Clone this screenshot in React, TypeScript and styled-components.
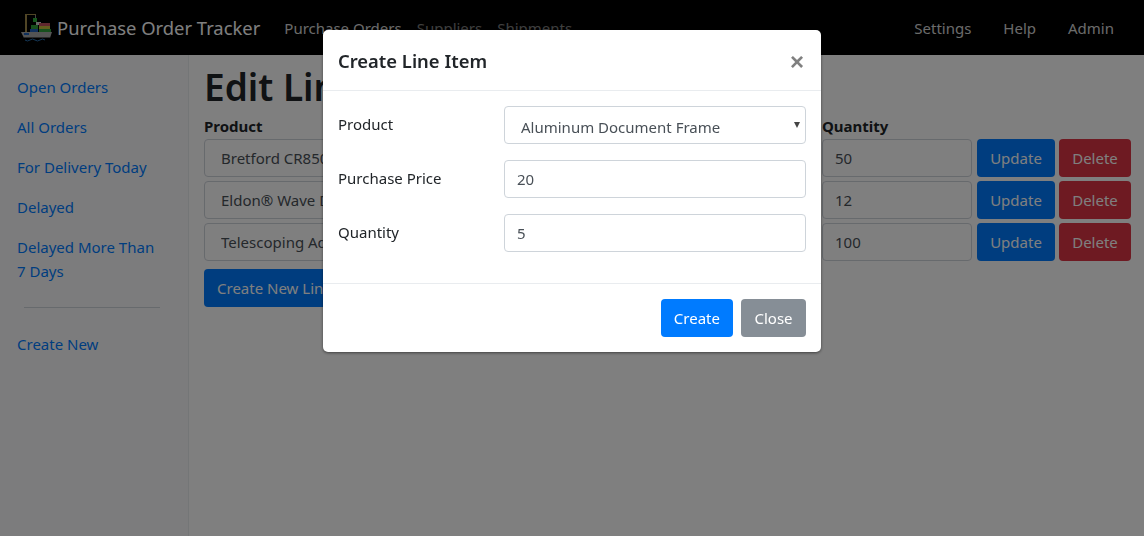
import React from 'react';
import styled, { createGlobalStyle } from 'styled-components';

const GlobalStyle = createGlobalStyle`
  html, body {
    margin: 0;
    height: 100%;
    overflow: hidden;
    background: #fff;
  }
  body {
    font-family: "Noto Sans", "Open Sans", "Liberation Sans", sans-serif;
    font-size: 15px;
    color: #212529;
  }
  * {
    box-sizing: border-box;
  }
`;

const Page = styled.div`
  height: 536px;
  display: flex;
  flex-direction: column;
`;

const Navbar = styled.nav`
  height: 55px;
  background: #000;
  display: flex;
  align-items: center;
  padding: 0 30px 0 21px;
  flex: none;
`;

const Brand = styled.a`
  display: flex;
  align-items: center;
  color: #fff;
  font-size: 18.4px;
  margin-right: 24px;
  white-space: nowrap;
  svg {
    margin-right: 4px;
  }
`;

const NavGroup = styled.div<{ $right?: boolean }>`
  display: flex;
  gap: ${(p) => (p.$right ? '32px' : '15px')};
  margin-left: ${(p) => (p.$right ? 'auto' : '0')};
`;

const NavLink = styled.a<{ $dim?: boolean }>`
  font-size: 15px;
  color: ${(p) => (p.$dim ? 'rgba(255,255,255,.5)' : 'rgba(255,255,255,.85)')};
  white-space: nowrap;
`;

const Body = styled.div`
  flex: 1;
  display: flex;
  min-height: 0;
`;

const Sidebar = styled.aside`
  width: 189px;
  flex: none;
  background: #f8f9fa;
  border-right: 1px solid #e9ecef;
  padding: 20px 28px 0 17px;
`;

const SideLink = styled.a`
  display: block;
  color: #007bff;
  line-height: 24px;
  margin-bottom: 16px;
`;

const SideRule = styled.hr`
  border: 0;
  border-top: 1px solid #ced4da;
  margin: 24px 0 24px 7px;
`;

const Main = styled.main`
  flex: 1;
  padding: 5px 13px 0 15px;
`;

const Title = styled.h1`
  margin: 0;
  font-size: 37px;
  font-weight: 600;
  line-height: 54px;
`;

const Grid = styled.div`
  display: grid;
  grid-template-columns: 308px 302px 151px 78px 72px;
  gap: 4px;
  align-items: center;
`;

const ColHead = styled.div<{ $col: string }>`
  font-weight: 700;
  line-height: 24px;
  margin-bottom: -3px;
  grid-column: ${(p) => p.$col};
`;

const Field = styled.input<{ $wide?: boolean }>`
  display: block;
  width: 100%;
  height: 38px;
  padding: 0 ${(p) => (p.$wide ? '16px' : '12px')};
  background: #fff;
  border: 1px solid #ced4da;
  border-radius: 4px;
  color: #495057;
  font: inherit;
  outline: none;
`;

const QtyField = styled(Field)`
  width: 150px;
`;

const Button = styled.button<{ $kind: 'primary' | 'danger' | 'secondary' }>`
  height: 38px;
  min-width: 65px;
  padding: 0 12px;
  border: 1px solid transparent;
  border-radius: 4px;
  color: #fff;
  font: inherit;
  white-space: nowrap;
  background: ${(p) =>
    p.$kind === 'primary' ? '#007bff' : p.$kind === 'danger' ? '#dc3545' : '#868e96'};
`;

const GridButton = styled(Button)`
  width: 100%;
  padding: 0;
`;

const CreateRow = styled.div`
  margin-top: 8px;
`;

const Backdrop = styled.div`
  position: fixed;
  inset: 0;
  background: rgba(0, 0, 0, 0.5);
`;

const Modal = styled.div`
  position: fixed;
  top: 30px;
  left: 323px;
  width: 498px;
  background: #fff;
  border-radius: 5px;
  box-shadow: 0 1px 3px rgba(0, 0, 0, 0.5);
`;

const ModalHeader = styled.div`
  height: 61px;
  border-bottom: 1px solid #e9ecef;
  padding: 0 15px;
  display: flex;
  align-items: center;
  justify-content: space-between;
`;

const ModalTitle = styled.h5`
  margin: 2px 0 0;
  font-size: 18.4px;
  font-weight: 600;
  line-height: 58px;
`;

const CloseX = styled.span`
  color: #808080;
  font-family: "Liberation Sans", sans-serif;
  font-weight: 700;
  font-size: 24px;
  line-height: 1;
  margin: 4px 2px 0 0;
`;

const ModalBody = styled.div`
  padding: 15px 15px 31px;
  display: flex;
  flex-direction: column;
  gap: 16px;
`;

const FormRow = styled.div`
  display: grid;
  grid-template-columns: 166px 302px;
  align-items: center;
`;

const FormLabel = styled.label`
  line-height: 24px;
  margin-top: -2px;
`;

const SelectWrap = styled.div`
  position: relative;
  &::after {
    content: '';
    position: absolute;
    right: 6px;
    top: 16px;
    border: 3.5px solid transparent;
    border-top: 6px solid #444;
    border-bottom: 0;
  }
`;

const Select = styled.select`
  display: block;
  width: 100%;
  height: 38px;
  padding: 3px 16px 0;
  appearance: none;
  background: #fff;
  border: 1px solid #ced4da;
  border-radius: 4px;
  color: #495057;
  font: inherit;
  outline: none;
`;

const ModalFooter = styled.div`
  height: 69px;
  border-top: 1px solid #e9ecef;
  padding: 0 15px;
  display: flex;
  align-items: center;
  justify-content: flex-end;
  gap: 8px;
`;

const Logo = () => (
  <svg width="32" height="28" viewBox="0 0 32 28">
    <rect x="4" y="0" width="2" height="18" fill="#a08a4a" />
    <rect x="4" y="0" width="11" height="1" fill="#a08a4a" />
    <rect x="14" y="1" width="1" height="4" fill="#888" />
    <rect x="12" y="4" width="4" height="4" fill="#2fae3c" />
    <rect x="15" y="8" width="5" height="3" fill="#d0d0d0" />
    <rect x="18" y="9" width="11" height="3" fill="#c24f5c" />
    <rect x="10" y="11" width="7" height="4" fill="#2f9e3a" />
    <rect x="18" y="12" width="11" height="3" fill="#c7b93c" />
    <rect x="9" y="15" width="8" height="3" fill="#2060b8" />
    <rect x="18" y="15" width="12" height="3" fill="#2f9e3a" />
    <polygon points="0,18 31,18 29,24 3,24" fill="#a8a8a8" />
    <rect x="3" y="19" width="5" height="2" fill="#2060b8" />
    <rect x="3" y="23" width="26" height="1" fill="#555" />
    <path d="M4 26q2.5 2 5 0t5 0 5 0 5 0" stroke="#2a6fb0" strokeWidth="1" fill="none" />
  </svg>
);

const rows = [
  { product: 'Bretford CR8500 Series Meeting Table', price: '225', qty: '50' },
  { product: 'Eldon\u00ae Wave Desk Accessories', price: '8', qty: '12' },
  { product: 'Telescoping Adjustable Floor Lamp', price: '15', qty: '100' },
];

export default function App() {
  return (
    <>
      <GlobalStyle />
      <Page>
        <Navbar>
          <Brand>
            <Logo />
            Purchase Order Tracker
          </Brand>
          <NavGroup>
            <NavLink>Purchase Orders</NavLink>
            <NavLink $dim>Suppliers</NavLink>
            <NavLink $dim>Shipments</NavLink>
          </NavGroup>
          <NavGroup $right>
            <NavLink>Settings</NavLink>
            <NavLink>Help</NavLink>
            <NavLink>Admin</NavLink>
          </NavGroup>
        </Navbar>
        <Body>
          <Sidebar>
            <SideLink>Open Orders</SideLink>
            <SideLink>All Orders</SideLink>
            <SideLink>For Delivery Today</SideLink>
            <SideLink>Delayed</SideLink>
            <SideLink>Delayed More Than 7 Days</SideLink>
            <SideRule />
            <SideLink>Create New</SideLink>
          </Sidebar>
          <Main>
            <Title>Edit Line Items</Title>
            <Grid>
              <ColHead $col="1">Product</ColHead>
              <ColHead $col="2">Purchase Price</ColHead>
              <ColHead $col="3 / span 3">Quantity</ColHead>
              {rows.map((r) => (
                <React.Fragment key={r.product}>
                  <Field $wide readOnly value={r.product} />
                  <Field readOnly value={r.price} />
                  <QtyField readOnly value={r.qty} />
                  <GridButton $kind="primary">Update</GridButton>
                  <GridButton $kind="danger">Delete</GridButton>
                </React.Fragment>
              ))}
            </Grid>
            <CreateRow>
              <Button $kind="primary">Create New Line Item</Button>
            </CreateRow>
          </Main>
        </Body>
      </Page>
      <Backdrop />
      <Modal>
        <ModalHeader>
          <ModalTitle>Create Line Item</ModalTitle>
          <CloseX>×</CloseX>
        </ModalHeader>
        <ModalBody>
          <FormRow>
            <FormLabel>Product</FormLabel>
            <SelectWrap>
              <Select defaultValue="Aluminum Document Frame">
                <option>Aluminum Document Frame</option>
              </Select>
            </SelectWrap>
          </FormRow>
          <FormRow>
            <FormLabel>Purchase Price</FormLabel>
            <Field readOnly value="20" />
          </FormRow>
          <FormRow>
            <FormLabel>Quantity</FormLabel>
            <Field readOnly value="5" />
          </FormRow>
        </ModalBody>
        <ModalFooter>
          <Button $kind="primary">Create</Button>
          <Button $kind="secondary">Close</Button>
        </ModalFooter>
      </Modal>
    </>
  );
}
